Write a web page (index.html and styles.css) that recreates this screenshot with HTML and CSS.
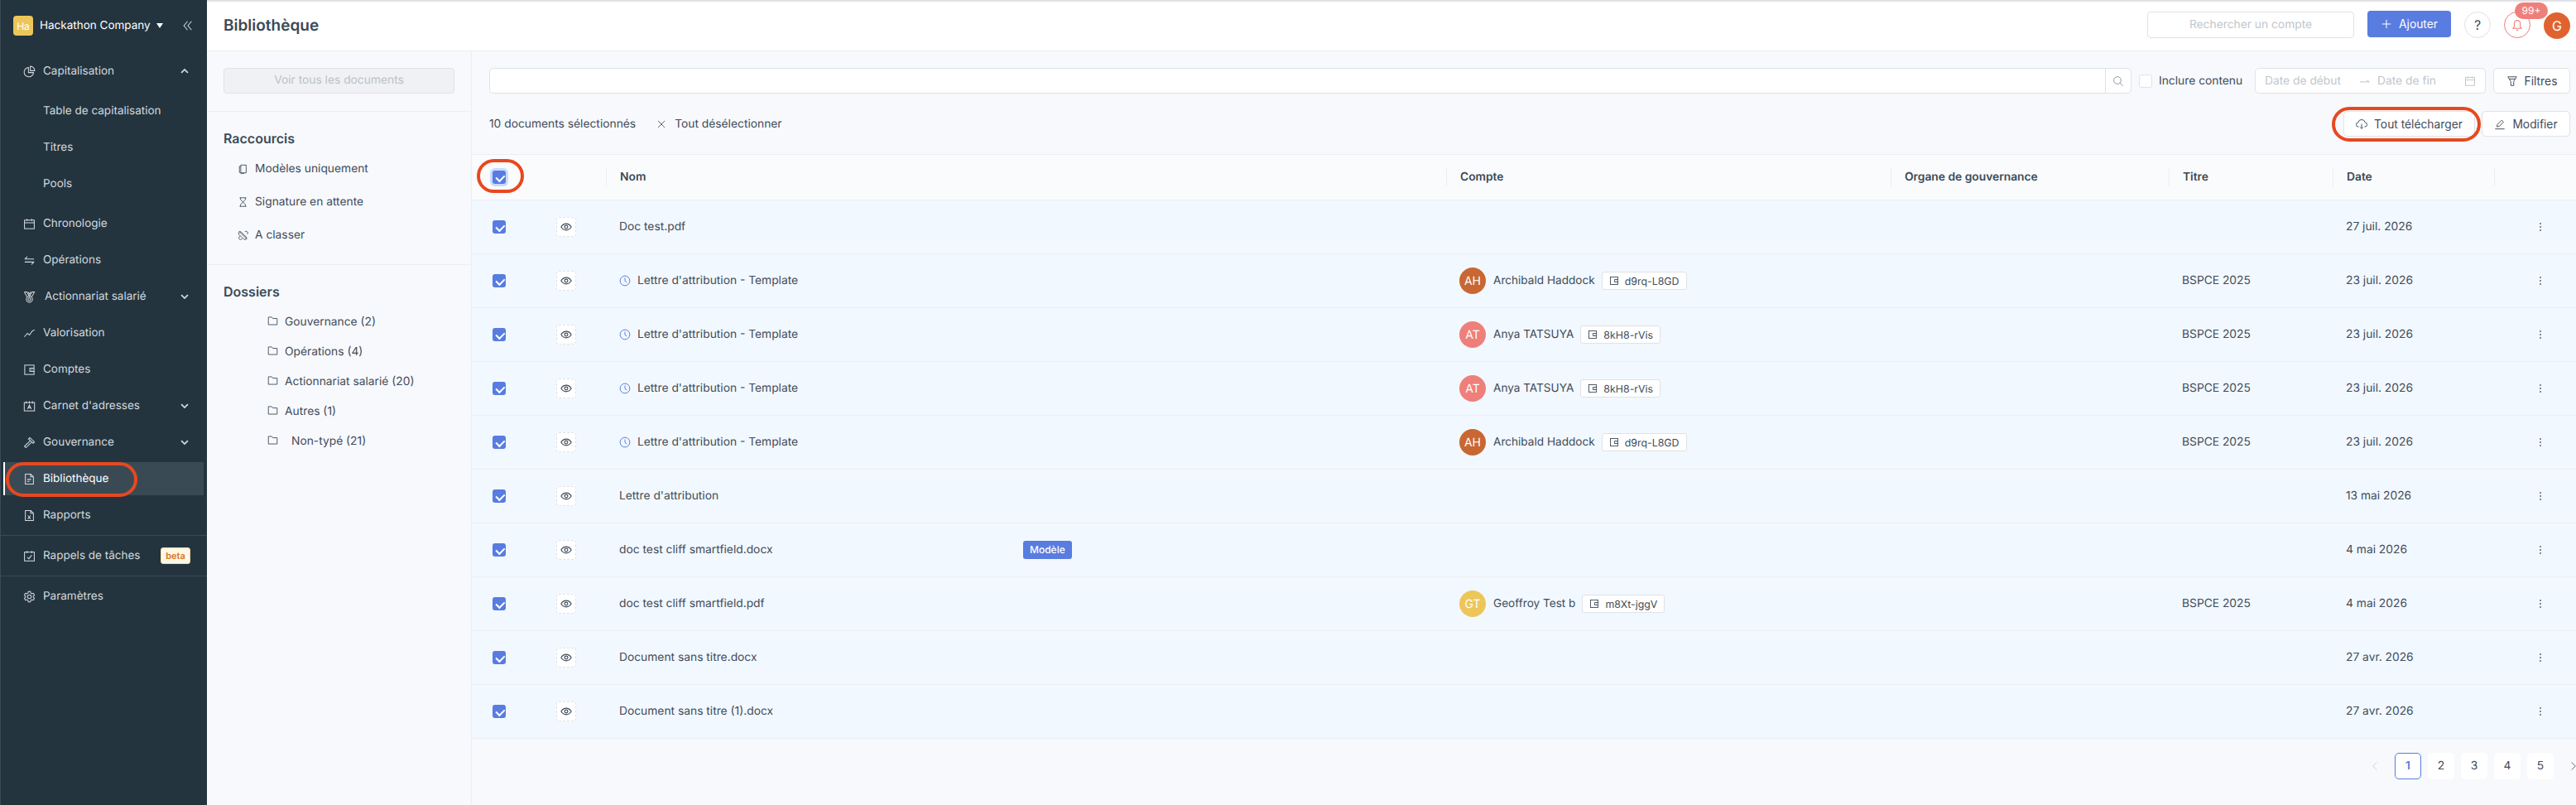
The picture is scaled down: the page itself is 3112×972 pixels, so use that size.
FILE: index.html
```html
<!DOCTYPE html>
<html lang="fr">
<head>
<meta charset="UTF-8">
<title>Bibliothèque</title>
<link rel="stylesheet" href="styles.css">
</head>
<body>

<svg class="sprite" xmlns="http://www.w3.org/2000/svg">
    <symbol id="i-pie" viewBox="0 0 16 16"><path d="M6.8 2.6a6.1 6.1 0 1 0 6.6 6.6H6.8z"/><path d="M9.2 1.2v5.6h5.6a5.6 5.6 0 0 0-5.6-5.6z"/></symbol>
    <symbol id="i-calendar" viewBox="0 0 16 16"><rect x="1.7" y="3" width="12.6" height="11" /><path d="M1.7 6.4h12.6M5 1.4V4M11 1.4V4"/></symbol>
    <symbol id="i-swap" viewBox="0 0 16 16"><path d="M2 6.2h12M5.4 3 2 6.2M14 10H2M10.6 13.2 14 10"/></symbol>
    <symbol id="i-medal" viewBox="0 0 16 16"><path d="M1.5 1.5h3.2l3.3 6 3.3-6h3.2L10.8 8.4M5.2 8.4 1.5 1.5M6.4 1.5 8 4.4l1.6-2.9"/><circle cx="8" cy="11" r="4"/><circle cx="8" cy="11" r="1.8"/></symbol>
    <symbol id="i-line" viewBox="0 0 16 16"><path d="m1.5 12.5 4-4.5 2.6 2.2 3.4-5 3-1.7"/></symbol>
    <symbol id="i-wallet" viewBox="0 0 16 16"><rect x="2" y="2" width="12" height="12"/><path d="M14 6H8.6v4H14M10.6 8h.8"/></symbol>
    <symbol id="i-book" viewBox="0 0 16 16"><rect x="1.4" y="3.2" width="13.2" height="10.8"/><path d="M4 1.5v3M8 1.5v3M12 1.5v3M5.6 11.6 8 6.4l2.4 5.2M6.4 10h3.2"/></symbol>
    <symbol id="i-hammer" viewBox="0 0 16 16"><path d="m8.5 1.5 6 5.6-1.7 1.7-6-5.6zM8.6 6 1.6 12.6l1.8 1.9 7-6.7"/></symbol>
    <symbol id="i-file" viewBox="0 0 16 16"><path d="M2.8 1.5h7l3.4 3.4v9.6H2.8zM9.6 1.5V5h3.6M5.2 8.4h5M5.2 11h3"/></symbol>
    <symbol id="i-excel" viewBox="0 0 16 16"><path d="M2.8 1.5h7l3.4 3.4v9.6H2.8zM9.6 1.5V5h3.6M6 8l3.6 4.4M9.6 8 6 12.4"/></symbol>
    <symbol id="i-check-cal" viewBox="0 0 16 16"><rect x="1.7" y="2.8" width="12.6" height="11.4"/><path d="M5 1.4v2.8M11 1.4v2.8M5.4 9.4l2 2 3.6-4.6"/></symbol>
    <symbol id="i-gear" viewBox="0 0 16 16"><circle cx="8" cy="8" r="2.4"/><path d="m6.6 1.4h2.8l.4 1.9 1.4.8 1.9-.6 1.4 2.4-1.5 1.3v1.6l1.5 1.3-1.4 2.4-1.9-.6-1.4.8-.4 1.9H6.6l-.4-1.9-1.4-.8-1.9.6-1.4-2.4 1.5-1.3V7.2L1.5 5.9l1.4-2.4 1.9.6 1.4-.8z"/></symbol>
    <symbol id="i-chevron" viewBox="0 0 16 16"><path d="m3.5 5.8 4.5 4.5 4.5-4.5"/></symbol>
    <symbol id="i-copy" viewBox="0 0 16 16"><path d="M4.8 2.2h8v11.6H4.8zM4.8 4H2.8v9.2l2.4 1.4H10"/></symbol>
    <symbol id="i-hourglass" viewBox="0 0 16 16"><path d="M3 1.6h10M3 14.4h10M4.4 1.6v2.6L8 8l3.6-3.8V1.6M4.4 14.4v-2.6L8 8l3.6 3.8v2.6"/></symbol>
    <symbol id="i-unlink" viewBox="0 0 16 16"><path d="m5.4 3.2 7.4 7.4a2.5 2.5 0 0 1-3.6 3.4L2 6.8a2.5 2.5 0 0 1 3.4-3.6zM10.6 3.2l.6-.6a2.5 2.5 0 0 1 3.4 3.6l-.6.6M3.4 9.4l-1 1a2.5 2.5 0 0 0 3.4 3.6l1-1M2 2l12 12"/></symbol>
    <symbol id="i-folder" viewBox="0 0 16 16"><path d="M1.5 2.4h5l1.6 2h6.4v9.2h-13z"/></symbol>
    <symbol id="i-search" viewBox="0 0 16 16"><circle cx="6.8" cy="6.8" r="5"/><path d="m10.5 10.5 4 4"/></symbol>
    <symbol id="i-eye" viewBox="0 0 16 16"><path d="M1 8c1.8-3 4.200-4.400 7-4.400S13.200 5 15 8c-1.800 3-4.200 4.400-7 4.400S2.800 11 1 8z"/><circle cx="8" cy="8" r="2.200"/></symbol>
    <symbol id="i-clock" viewBox="0 0 16 16"><circle cx="8" cy="8" r="6.700"/><path d="M8 4v4.400l2.600 1.800"/></symbol>
</svg>

<div class="app">
    <aside class="sidebar">
        <div class="company">
            <span class="company-logo">Ha</span>
            <span class="company-name">Hackathon Company</span>
            <span class="caret"></span>
            <svg class="collapse" viewBox="0 0 16 16"><path d="M7.500 2 2.500 8l5 6M13 2 8 8l5 6"/></svg>
        </div>
        <nav class="nav">
            <a class="nav-item group-end"><svg class="icon"><use href="#i-pie"/></svg>Capitalisation<svg class="chevron up"><use href="#i-chevron"/></svg></a>
            <a class="nav-item sub">Table de capitalisation</a>
            <a class="nav-item sub">Titres</a>
            <a class="nav-item sub group-end">Pools</a>
            <a class="nav-item"><svg class="icon"><use href="#i-calendar"/></svg>Chronologie</a>
            <a class="nav-item"><svg class="icon"><use href="#i-swap"/></svg>Opérations</a>
            <a class="nav-item"><svg class="icon wide"><use href="#i-medal"/></svg>Actionnariat salarié<svg class="chevron"><use href="#i-chevron"/></svg></a>
            <a class="nav-item"><svg class="icon"><use href="#i-line"/></svg>Valorisation</a>
            <a class="nav-item"><svg class="icon"><use href="#i-wallet"/></svg>Comptes</a>
            <a class="nav-item"><svg class="icon"><use href="#i-book"/></svg>Carnet d'adresses<svg class="chevron"><use href="#i-chevron"/></svg></a>
            <a class="nav-item"><svg class="icon"><use href="#i-hammer"/></svg>Gouvernance<svg class="chevron"><use href="#i-chevron"/></svg></a>
            <a class="nav-item active"><svg class="icon"><use href="#i-file"/></svg>Bibliothèque</a>
            <a class="nav-item"><svg class="icon"><use href="#i-excel"/></svg>Rapports</a>
        </nav>
        <div class="nav-section">
            <a class="nav-item"><svg class="icon"><use href="#i-check-cal"/></svg>Rappels de tâches<span class="beta">beta</span></a>
        </div>
        <div class="nav-section">
            <a class="nav-item"><svg class="icon"><use href="#i-gear"/></svg>Paramètres</a>
        </div>
    </aside>

    <div class="page">
        <header class="topbar">
            <h1>Bibliothèque</h1>
            <div class="topbar-actions">
                <div class="account-search">Rechercher un compte</div>
                <button class="btn-primary"><svg viewBox="0 0 16 16"><path d="M8 2v12M2 8h12"/></svg>Ajouter</button>
                <span class="round-btn">?</span>
                <span class="round-btn bell">
                    <svg viewBox="0 0 16 16"><path d="M3 12.200h10l-1.400-1.800V6.200a3.600 3.600 0 0 0-7.200 0v4.200zM6.800 14.400h2.400"/></svg>
                    <span class="count">99+</span>
                </span>
                <span class="user">G</span>
            </div>
        </header>

        <div class="content">
            <section class="filters-panel">
                <div class="panel-block first">
                    <div class="see-all">Voir tous les documents</div>
                </div>
                <div class="panel-block shortcuts">
                    <h2>Raccourcis</h2>
                    <a class="shortcut"><svg><use href="#i-copy"/></svg>Modèles uniquement</a>
                    <a class="shortcut"><svg><use href="#i-hourglass"/></svg>Signature en attente</a>
                    <a class="shortcut"><svg><use href="#i-unlink"/></svg>A classer</a>
                </div>
                <div class="panel-block folders">
                    <h2>Dossiers</h2>
                    <a class="folder"><svg><use href="#i-folder"/></svg>Gouvernance (2)</a>
                    <a class="folder"><svg><use href="#i-folder"/></svg>Opérations (4)</a>
                    <a class="folder"><svg><use href="#i-folder"/></svg>Actionnariat salarié (20)</a>
                    <a class="folder"><svg><use href="#i-folder"/></svg>Autres (1)</a>
                    <a class="folder untyped"><svg><use href="#i-folder"/></svg>Non-typé (21)</a>
                </div>
            </section>

            <main class="documents">
                <div class="toolbar">
                    <div class="search-box"><span class="search-input"></span><span class="search-addon"><svg><use href="#i-search"/></svg></span></div>
                    <label class="include"><span class="box"></span>Inclure contenu</label>
                    <div class="date-range">
                        <span class="date-start">Date de début</span>
                        <svg class="date-arrow" viewBox="0 0 16 16"><path d="M1 9h13l-3.500-2.400"/></svg>
                        <span class="date-end">Date de fin</span>
                        <svg class="date-icon"><use href="#i-calendar"/></svg>
                    </div>
                    <button class="btn"><svg viewBox="0 0 16 16"><path d="M2 2h12l-4 6.400V14H6V8.400zM3.800 5h8.400"/></svg>Filtres</button>
                </div>

                <div class="selection-bar">
                    <span class="selected-count">10 documents sélectionnés</span>
                    <a class="deselect"><svg viewBox="0 0 16 16"><path d="m2.500 2.500 11 11M13.500 2.500l-11 11"/></svg>Tout désélectionner</a>
                    <div class="selection-actions">
                        <button class="btn download"><svg viewBox="0 0 16 16"><path d="M4 11.500H3.600a3 3 0 0 1-.3-6 4.800 4.800 0 0 1 9.400 0 3 3 0 0 1-.3 6H12M8 7.500v6.500M6 12l2 2 2-2"/></svg>Tout télécharger</button>
                        <button class="btn"><svg viewBox="0 0 16 16"><path d="M1.500 14.500h13M4 11.500l.5-3L10.500 2.500l2.500 2.500L7 11z"/></svg>Modifier</button>
                    </div>
                </div>

                <table class="docs">
                    <colgroup>
                        <col class="c-check"><col class="c-eye"><col class="c-name"><col class="c-account"><col class="c-organ"><col class="c-title"><col class="c-date"><col class="c-more">
                    </colgroup>
                    <thead>
                        <tr>
                            <th class="check"><span class="checkbox halo"></span></th>
                            <th></th>
                            <th><div class="th-in">Nom</div></th>
                            <th><div class="th-in">Compte</div></th>
                            <th><div class="th-in">Organe de gouvernance</div></th>
                            <th><div class="th-in">Titre</div></th>
                            <th><div class="th-in">Date</div></th>
                            <th><div class="th-in">&nbsp;</div></th>
                        </tr>
                    </thead>
                    <tbody>
                        <tr>
                            <td class="check"><span class="checkbox"></span></td>
                            <td><span class="eye"><svg><use href="#i-eye"/></svg></span></td>
                            <td>Doc test.pdf</td>
                            <td></td><td></td><td></td>
                            <td>27 juil. 2026</td>
                            <td class="more"><span class="dots"></span></td>
                        </tr>
                        <tr>
                            <td class="check"><span class="checkbox"></span></td>
                            <td><span class="eye"><svg><use href="#i-eye"/></svg></span></td>
                            <td><div class="doc-name"><svg class="clock"><use href="#i-clock"/></svg>Lettre d'attribution - Template</div></td>
                            <td><div class="account"><span class="avatar orange">AH</span>Archibald Haddock<span class="tag"><svg><use href="#i-wallet"/></svg>d9rq-L8GD</span></div></td>
                            <td></td>
                            <td>BSPCE 2025</td>
                            <td>23 juil. 2026</td>
                            <td class="more"><span class="dots"></span></td>
                        </tr>
                        <tr>
                            <td class="check"><span class="checkbox"></span></td>
                            <td><span class="eye"><svg><use href="#i-eye"/></svg></span></td>
                            <td><div class="doc-name"><svg class="clock"><use href="#i-clock"/></svg>Lettre d'attribution - Template</div></td>
                            <td><div class="account"><span class="avatar salmon">AT</span>Anya TATSUYA<span class="tag"><svg><use href="#i-wallet"/></svg>8kH8-rVis</span></div></td>
                            <td></td>
                            <td>BSPCE 2025</td>
                            <td>23 juil. 2026</td>
                            <td class="more"><span class="dots"></span></td>
                        </tr>
                        <tr>
                            <td class="check"><span class="checkbox"></span></td>
                            <td><span class="eye"><svg><use href="#i-eye"/></svg></span></td>
                            <td><div class="doc-name"><svg class="clock"><use href="#i-clock"/></svg>Lettre d'attribution - Template</div></td>
                            <td><div class="account"><span class="avatar salmon">AT</span>Anya TATSUYA<span class="tag"><svg><use href="#i-wallet"/></svg>8kH8-rVis</span></div></td>
                            <td></td>
                            <td>BSPCE 2025</td>
                            <td>23 juil. 2026</td>
                            <td class="more"><span class="dots"></span></td>
                        </tr>
                        <tr>
                            <td class="check"><span class="checkbox"></span></td>
                            <td><span class="eye"><svg><use href="#i-eye"/></svg></span></td>
                            <td><div class="doc-name"><svg class="clock"><use href="#i-clock"/></svg>Lettre d'attribution - Template</div></td>
                            <td><div class="account"><span class="avatar orange">AH</span>Archibald Haddock<span class="tag"><svg><use href="#i-wallet"/></svg>d9rq-L8GD</span></div></td>
                            <td></td>
                            <td>BSPCE 2025</td>
                            <td>23 juil. 2026</td>
                            <td class="more"><span class="dots"></span></td>
                        </tr>
                        <tr>
                            <td class="check"><span class="checkbox"></span></td>
                            <td><span class="eye"><svg><use href="#i-eye"/></svg></span></td>
                            <td>Lettre d'attribution</td>
                            <td></td><td></td><td></td>
                            <td>13 mai 2026</td>
                            <td class="more"><span class="dots"></span></td>
                        </tr>
                        <tr>
                            <td class="check"><span class="checkbox"></span></td>
                            <td><span class="eye"><svg><use href="#i-eye"/></svg></span></td>
                            <td><div class="doc-name"><span class="name-text">doc test cliff smartfield.docx</span><span class="model">Modèle</span></div></td>
                            <td></td><td></td><td></td>
                            <td>4 mai 2026</td>
                            <td class="more"><span class="dots"></span></td>
                        </tr>
                        <tr>
                            <td class="check"><span class="checkbox"></span></td>
                            <td><span class="eye"><svg><use href="#i-eye"/></svg></span></td>
                            <td>doc test cliff smartfield.pdf</td>
                            <td><div class="account"><span class="avatar yellow">GT</span>Geoffroy Test b<span class="tag"><svg><use href="#i-wallet"/></svg>m8Xt-jggV</span></div></td>
                            <td></td>
                            <td>BSPCE 2025</td>
                            <td>4 mai 2026</td>
                            <td class="more"><span class="dots"></span></td>
                        </tr>
                        <tr>
                            <td class="check"><span class="checkbox"></span></td>
                            <td><span class="eye"><svg><use href="#i-eye"/></svg></span></td>
                            <td>Document sans titre.docx</td>
                            <td></td><td></td><td></td>
                            <td>27 avr. 2026</td>
                            <td class="more"><span class="dots"></span></td>
                        </tr>
                        <tr>
                            <td class="check"><span class="checkbox"></span></td>
                            <td><span class="eye"><svg><use href="#i-eye"/></svg></span></td>
                            <td>Document sans titre (1).docx</td>
                            <td></td><td></td><td></td>
                            <td>27 avr. 2026</td>
                            <td class="more"><span class="dots"></span></td>
                        </tr>
                    </tbody>
                </table>

                <div class="pagination">
                    <span class="page-btn arrow off"><svg viewBox="0 0 16 16"><path d="M11 2 5 8l6 6"/></svg></span>
                    <span class="page-btn current">1</span>
                    <span class="page-btn">2</span>
                    <span class="page-btn">3</span>
                    <span class="page-btn">4</span>
                    <span class="page-btn">5</span>
                    <span class="page-btn arrow"><svg viewBox="0 0 16 16"><path d="m5 2 6 6-6 6"/></svg></span>
                </div>
            </main>
        </div>
    </div>

    <!-- red marks drawn over the screenshot -->
    <span class="mark mark-nav"></span>
    <span class="mark mark-check"></span>
    <span class="mark mark-download"></span>
</div>

</body>
</html>
```

FILE: styles.css
```css
* {
    box-sizing: border-box;
}

html, body {
    margin: 0;
    height: 972px;
    overflow: hidden;
}

body {
    font-family: Inter, "Liberation Sans", sans-serif;
    font-size: 13.8px;
    color: #3f4c59;
    background-color: #f8f9fd;
    text-rendering: geometricPrecision;
}

.sprite {
    display: none;
}

.app {
    position: relative;
    display: flex;
    width: 3112px;
    height: 972px;
    overflow: hidden;
}

/* Sidebar */
.sidebar {
    flex: 0 0 250px;
    background-color: #23343f;
    border-left: 1px solid #3a4a55;
    color: #d3d9dd;
    font-size: 13.5px;
}

.company {
    display: flex;
    align-items: center;
    height: 62px;
    padding: 0 0 0 15px;
    color: #fff;
}

.company-logo {
    display: flex;
    align-items: center;
    justify-content: center;
    width: 24px;
    height: 24px;
    border-radius: 4px;
    background-color: #edc65a;
    color: #fff;
    font-size: 12px;
}

.company-name {
    margin-left: 8px;
}

.caret {
    margin-left: 7px;
    border-left: 4.5px solid transparent;
    border-right: 4.5px solid transparent;
    border-top: 6px solid #fff;
}

.collapse {
    width: 14px;
    height: 14px;
    margin-left: auto;
    margin-right: 16px;
    fill: none;
    stroke: #d3d9dd;
    stroke-width: 1.2;
}

.nav {
    padding-top: 4px;
}

.nav-item {
    display: flex;
    align-items: center;
    height: 40px;
    margin: 0 4px 4px 3px;
    padding-left: 24px;
    white-space: nowrap;
}

.nav-item.group-end {
    margin-bottom: 8px;
}

.nav-item.sub {
    padding-left: 48px;
}

.nav-item.active {
    background-color: #3a4a55;
    border-left: 2px solid #fff;
    padding-left: 22px;
    color: #fff;
}

.icon {
    flex: none;
    width: 15px;
    height: 15px;
    margin-right: 9px;
    fill: none;
    stroke: #d3d9dd;
    stroke-width: 1.100;
}

.icon.wide {
    margin-right: 11px;
}

.chevron {
    width: 14px;
    height: 14px;
    margin-left: auto;
    margin-right: 16px;
    fill: none;
    stroke: #d3d9dd;
    stroke-width: 2;
}

.chevron.up {
    transform: rotate(180deg);
}

.nav-section {
    border-top: 1px solid #3a4a55;
    padding-top: 4px;
}

.beta {
    width: 36px;
    margin-left: auto;
    margin-right: 16px;
    height: 20px;
    line-height: 19px;
    text-align: center;
    border: 1px solid #f6d9a0;
    border-radius: 3px;
    background-color: #fff7e6;
    color: #d4761f;
    font-size: 11px;
    font-weight: 600;
}

/* Top bar */
.page {
    flex: 1;
    display: flex;
    flex-direction: column;
    min-width: 0;
}

.topbar {
    display: flex;
    align-items: center;
    justify-content: space-between;
    flex: 0 0 62px;
    padding: 0 7px 3px 20px;
    background-color: #fff;
    border-top: 2px solid #dfe1e4;
    border-bottom: 1px solid #e9ecf0;
}

h1 {
    margin: 0;
    font-size: 19px;
    font-weight: 600;
    color: #3a4a57;
}

.topbar-actions {
    display: flex;
    align-items: center;
}

.account-search {
    width: 250px;
    height: 32px;
    line-height: 30px;
    text-align: center;
    border: 1px solid #dfe2e6;
    border-radius: 4px;
    color: #c1c6cb;
}

.btn-primary {
    display: flex;
    align-items: center;
    justify-content: center;
    gap: 8px;
    width: 101px;
    height: 32px;
    margin-left: 16px;
    margin-top: -2px;
    border: none;
    border-radius: 4px;
    background-color: #587ce0;
    color: #fff;
    font: inherit;
}

.btn-primary svg {
    width: 14px;
    height: 14px;
    fill: none;
    stroke: #fff;
    stroke-width: 1.200;
}

.round-btn {
    position: relative;
    display: flex;
    align-items: center;
    justify-content: center;
    width: 32px;
    height: 32px;
    margin-left: 16px;
    border: 1px solid #dfe2e6;
    border-radius: 50%;
    font-size: 16px;
}

.bell {
    border-color: #ef7f7a;
}

.bell svg {
    width: 16px;
    height: 16px;
    fill: none;
    stroke: #ef7f7a;
    stroke-width: 1.100;
}

.count {
    position: absolute;
    top: -12px;
    left: 12px;
    width: 40px;
    height: 20px;
    line-height: 20px;
    text-align: center;
    border-radius: 10px;
    background-color: #ef7f7a;
    color: #fff;
    font-size: 12px;
}

.user {
    display: flex;
    align-items: center;
    justify-content: center;
    width: 32px;
    height: 32px;
    margin-left: 16px;
    margin-top: 2px;
    border-radius: 50%;
    background-color: #e0632f;
    color: #fff;
    font-size: 16px;
}

/* Left panel */
.content {
    flex: 1;
    display: flex;
    min-height: 0;
}

.filters-panel {
    flex: 0 0 320px;
    border-right: 1px solid #eceef2;
}

.panel-block {
    padding: 20px;
    border-bottom: 1px solid #eceef2;
}

.panel-block.first {
    padding-bottom: 21px;
}

.panel-block.folders {
    border-bottom: none;
    padding-top: 21px;
}

.see-all {
    height: 31px;
    line-height: 29px;
    text-align: center;
    border: 1px solid #dfe2e6;
    border-radius: 4px;
    background-color: #f0f1f4;
    color: #bcc1c6;
}

h2 {
    margin: 0 0 6px;
    font-size: 16px;
    line-height: 22px;
    font-weight: 600;
    color: #3a4a57;
}

.folders h2 {
    margin-bottom: 8px;
}

.shortcuts {
    padding-top: 21px;
    height: 185px;
}

.shortcut {
    display: flex;
    align-items: center;
    height: 40px;
    padding-left: 17px;
}

.shortcut svg {
    width: 13px;
    height: 14px;
    margin-right: 8px;
    fill: none;
    stroke: #3f4c59;
    stroke-width: 1.100;
}

.folder {
    display: flex;
    align-items: center;
    height: 36px;
    padding-left: 53px;
}

.folder svg {
    width: 13px;
    height: 13px;
    margin-right: 8px;
    margin-top: -3px;
    fill: none;
    stroke: #3f4c59;
    stroke-width: 1.100;
}

.folder.untyped svg {
    margin-right: 16px;
}

/* Documents */
.documents {
    flex: 1;
    min-width: 0;
}

.toolbar {
    display: flex;
    align-items: center;
    height: 31px;
    margin: 20px 7px 0 21px;
}

.search-box {
    display: flex;
    flex: 0 0 1984px;
    height: 31px;
    border: 1px solid #dfe2e6;
    border-radius: 5px;
    background-color: #fff;
}

.search-input {
    flex: 1;
}

.search-addon {
    display: flex;
    align-items: center;
    justify-content: center;
    flex: 0 0 31px;
    border-left: 1px solid #dfe2e6;
}

.search-addon svg {
    width: 14px;
    height: 14px;
    fill: none;
    stroke: #8d969e;
    stroke-width: 1.100;
}

.include {
    display: flex;
    align-items: center;
    margin-left: 9px;
    white-space: nowrap;
}

.box {
    width: 16px;
    height: 16px;
    margin-right: 8px;
    border: 1px solid #dfe2e6;
    border-radius: 3px;
    background-color: #fff;
}

.date-range {
    display: flex;
    align-items: center;
    width: 279px;
    height: 31px;
    margin-left: auto;
    padding: 0 11px;
    border: 1px solid #dfe2e6;
    border-radius: 5px;
    background-color: #fff;
    color: #c1c6cb;
}

.date-arrow {
    width: 14px;
    height: 14px;
    margin: 0 8px 0 22px;
    fill: none;
    stroke: #b5bac0;
    stroke-width: 1;
}

.date-icon {
    width: 14px;
    height: 14px;
    margin-left: auto;
    fill: none;
    stroke: #c1c6cb;
    stroke-width: 1.100;
}

.btn {
    display: flex;
    align-items: center;
    justify-content: center;
    gap: 8px;
    height: 31px;
    padding: 0 8px;
    border: 1px solid #dfe2e6;
    border-radius: 5px;
    background-color: #fff;
    color: #3f4c59;
    font: inherit;
    white-space: nowrap;
}

.btn svg {
    width: 14px;
    height: 14px;
    fill: none;
    stroke: #3f4c59;
    stroke-width: 1.100;
}

.toolbar .btn {
    width: 93px;
    margin-left: 9px;
}

.selection-bar {
    display: flex;
    align-items: center;
    height: 31px;
    margin: 21px 7px 0 21px;
}

.deselect {
    display: flex;
    align-items: center;
    margin-left: 25px;
}

.deselect svg {
    width: 12px;
    height: 12px;
    margin-right: 10px;
    fill: none;
    stroke: #3f4c59;
    stroke-width: 1.100;
}

.selection-actions {
    display: flex;
    gap: 8px;
    margin-left: auto;
}

.btn.download {
    width: 159px;
}

.selection-actions .btn:last-child {
    width: 107px;
}

/* Table */
.docs {
    width: 2542px;
    margin-top: 21px;
    border-collapse: collapse;
    table-layout: fixed;
}

.c-check { width: 86px; }
.c-eye { width: 76px; }
.c-name { width: 1015px; }
.c-account { width: 537px; }
.c-organ { width: 336px; }
.c-title { width: 198px; }
.c-date { width: 195px; }
.c-more { width: 99px; }

thead tr {
    height: 55px;
    background-color: #fafbfc;
    border-top: 1px solid #eceef2;
    border-bottom: 1px solid #eceef2;
}

th {
    padding: 0;
    text-align: left;
    font-weight: 600;
    color: #3a4a57;
}

.th-in {
    height: 22px;
    line-height: 22px;
    padding-left: 16px;
    border-left: 1px solid #eceef2;
}

tbody tr {
    height: 65px;
    background-color: #f2f8ff;
    border-bottom: 1px solid #eceef2;
}

td {
    padding: 0 0 0 16px;
    white-space: nowrap;
}

td.check, th.check {
    padding-left: 25px;
}

.checkbox {
    position: relative;
    display: block;
    width: 16px;
    height: 16px;
    border-radius: 3px;
    background-color: #587ce0;
}

.checkbox::after {
    content: "";
    position: absolute;
    left: 5.500px;
    top: 2.500px;
    width: 4.500px;
    height: 8px;
    border-right: 2px solid #fff;
    border-bottom: 2px solid #fff;
    transform: rotate(45deg);
}

.checkbox.halo {
    box-shadow: 0 0 0 3px #c9dcff;
}

.eye {
    display: flex;
    align-items: center;
    justify-content: center;
    width: 24px;
    height: 24px;
    border: 1px dashed #dfe2e6;
    border-radius: 3px;
    background-color: #fff;
}

.eye svg {
    width: 14px;
    height: 14px;
    fill: none;
    stroke: #3f4c59;
    stroke-width: 1.300;
}

.doc-name {
    display: flex;
    align-items: center;
}

.clock {
    width: 14px;
    height: 14px;
    margin-right: 8px;
    fill: none;
    stroke: #587ce0;
    stroke-width: 1.100;
}

.name-text {
    flex: 0 0 488px;
}

.model {
    height: 22px;
    line-height: 22px;
    padding: 0 8px;
    border-radius: 3px;
    background-color: #587ce0;
    color: #fff;
    font-size: 12px;
    font-weight: 500;
}

.account {
    display: flex;
    align-items: center;
    font-size: 13.600px;
}

.avatar {
    display: flex;
    align-items: center;
    justify-content: center;
    width: 32px;
    height: 32px;
    margin-right: 9px;
    border-radius: 50%;
    color: #fff;
    font-size: 14px;
}

.orange { background-color: #c96733; }
.salmon { background-color: #ef7f7a; }
.yellow { background-color: #edc65a; }

.tag {
    display: flex;
    align-items: center;
    height: 22px;
    margin-left: 8px;
    padding: 0 8px;
    border: 1px solid #dfe2e6;
    border-radius: 3px;
    background-color: #fff;
    font-size: 12.400px;
}

.tag svg {
    width: 12px;
    height: 12px;
    margin-right: 7px;
    fill: none;
    stroke: #3f4c59;
    stroke-width: 1.200;
}

.more {
    padding-left: 55px;
}

.dots {
    display: block;
    width: 2px;
    height: 2px;
    border-radius: 50%;
    background-color: #5d6975;
    box-shadow: 0 -4px 0 #5d6975, 0 4px 0 #5d6975;
}

/* Pagination */
.pagination {
    display: flex;
    gap: 8px;
    margin-top: 17px;
    margin-left: 2283px;
    width: 272px;
}

.page-btn {
    flex: 0 0 32px;
    display: flex;
    align-items: center;
    justify-content: center;
    height: 32px;
    border-radius: 5px;
    background-color: #fff;
}

.page-btn.current {
    border: 1px solid #587ce0;
    color: #587ce0;
    font-weight: 600;
}

.page-btn.arrow {
    background-color: transparent;
}

.page-btn.arrow svg {
    width: 12px;
    height: 12px;
    fill: none;
    stroke: #3f4c59;
    stroke-width: 1.100;
}

.page-btn.off svg {
    stroke: #c1c6cb;
}

/* Red marks */
.mark {
    position: absolute;
    border: 4px solid #e8481f;
    border-radius: 22px;
    pointer-events: none;
}

.mark-nav {
    left: 7px;
    top: 558px;
    width: 159px;
    height: 42px;
}

.mark-check {
    left: 576px;
    top: 192px;
    width: 57px;
    height: 41px;
}

.mark-download {
    left: 2817px;
    top: 129px;
    width: 180px;
    height: 42px;
}
```
